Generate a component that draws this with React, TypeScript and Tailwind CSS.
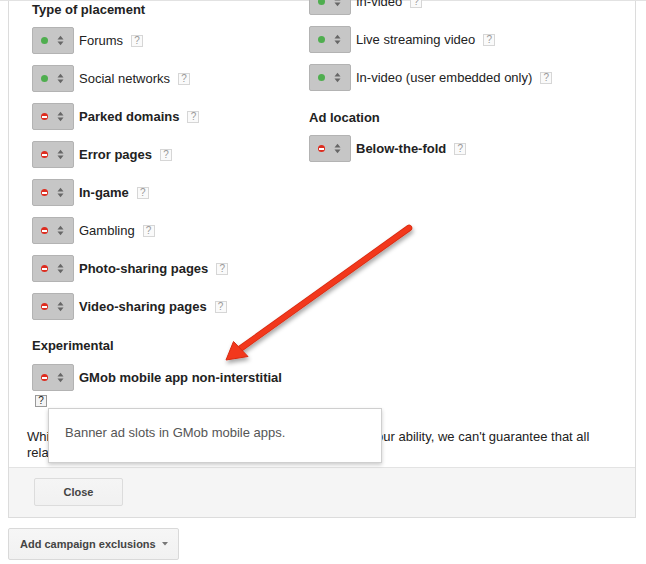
import React from "react";

const Arrows = () => (
  <svg width="7" height="11" viewBox="0 0 7 11" className="block">
    <polygon points="0.5,4.5 3.5,0.8 6.5,4.5" fill="#666" />
    <polygon points="0.5,6.5 3.5,10.2 6.5,6.5" fill="#666" />
  </svg>
);

const Toggle = ({ on }: { on: boolean }) => (
  <div className="flex items-center w-[42px] h-[27px] shrink-0 rounded-[2px] bg-[#c6c6c6] border border-[#b3b3b3] pl-[8px]">
    {on ? (
      <span className="block w-[7px] h-[7px] rounded-full bg-[#4fae4f]" />
    ) : (
      <span className="flex items-center justify-center w-[7px] h-[7px] rounded-full bg-[#dd2c1f]">
        <span className="block w-[5px] h-[2px] bg-white" />
      </span>
    )}
    <span className="ml-[9px]">
      <Arrows />
    </span>
  </div>
);

const Q = ({ dark }: { dark?: boolean }) => (
  <span
    className={
      dark
        ? "inline-flex items-center justify-center w-[12px] h-[12px] border border-[#999] bg-[#f4f4f4] text-[#222] text-[10px] leading-none"
        : "inline-flex items-center justify-center w-[12px] h-[12px] border border-[#d6d6d6] bg-[#fafafa] text-[#999] text-[10px] leading-none"
    }
  >
    ?
  </span>
);

const Row = ({
  label,
  on,
  bold,
  className,
}: {
  label: string;
  on: boolean;
  bold?: boolean;
  className: string;
}) => (
  <div className={`flex items-center h-[27px] ${className}`}>
    <Toggle on={on} />
    <span className={bold ? "ml-[5px] font-bold whitespace-nowrap" : "ml-[5px] whitespace-nowrap"}>{label}</span>
    <span className="ml-[8px] flex">
      <Q />
    </span>
  </div>
);

export default function App() {
  return (
    <div className="relative w-[646px] h-[564px] overflow-hidden bg-white font-['Liberation_Sans',Arial,sans-serif] text-[13px] leading-[16px] text-[#222]">
      <div className="h-px bg-[#e2e2e2]" />
      <div className="ml-[8px] w-[628px] border-x border-b border-[#dcdcdc]">
        <div className="flex pl-[23px] pt-[1px]">
          <div className="w-[277px] shrink-0">
            <div className="font-bold h-[16px]">Type of placement</div>
            <Row className="mt-[9px]" label="Forums" on />
            <Row className="mt-[11px]" label="Social networks" on />
            <Row className="mt-[11px]" label="Parked domains" on={false} bold />
            <Row className="mt-[11px]" label="Error pages" on={false} bold />
            <Row className="mt-[11px]" label="In-game" on={false} bold />
            <Row className="mt-[11px]" label="Gambling" on={false} />
            <Row className="mt-[11px]" label="Photo-sharing pages" on={false} bold />
            <Row className="mt-[11px]" label="Video-sharing pages" on={false} bold />
            <div className="font-bold h-[16px] mt-[18px]">Experimental</div>
            <div className="flex items-center h-[27px] mt-[10px]">
              <Toggle on={false} />
              <span className="ml-[5px] font-bold whitespace-nowrap">GMob mobile app non-interstitial</span>
            </div>
            <div className="flex mt-[4px] ml-[3px]">
              <Q dark />
            </div>
          </div>
          <div className="flex-1">
            <Row className="mt-[-14px]" label="In-video" on />
            <Row className="mt-[11px]" label="Live streaming video" on />
            <Row className="mt-[11px]" label="In-video (user embedded only)" on />
            <div className="font-bold h-[16px] mt-[19px]">Ad location</div>
            <Row className="mt-[9px]" label="Below-the-fold" on={false} bold />
          </div>
        </div>
        <p className="pl-[18px] mt-[22px] mb-[6px] whitespace-nowrap leading-[16px]">
          While we'll make every effort to exclude these, to the best of our ability, we can't guarantee that all
          <br />
          related placements will be excluded.
        </p>
        <div className="h-[50px] border-t border-[#e3e3e3] bg-[#f5f5f5] pl-[25px] pt-[10px]">
          <button className="w-[89px] h-[28px] rounded-[2px] border border-[#dcdcdc] bg-gradient-to-b from-[#f5f5f5] to-[#f1f1f1] text-[11px] font-bold text-[#444]">
            Close
          </button>
        </div>
      </div>
      <div className="ml-[8px] mt-[10px] flex items-center w-[171px] h-[32px] rounded-[2px] border border-[#d9d9d9] bg-gradient-to-b from-[#f6f6f6] to-[#f1f1f1] pl-[11px]">
        <span className="text-[11px] font-bold text-[#444] whitespace-nowrap">Add campaign exclusions</span>
        <svg width="6" height="4" viewBox="0 0 6 4" className="ml-[6px]">
          <polygon points="0,0 6,0 3,3.5" fill="#777" />
        </svg>
      </div>

      <div className="absolute left-[48px] top-[408px] w-[334px] h-[55px] bg-white border border-[#cfcfcf] shadow-[0_2px_4px_rgba(0,0,0,0.2)] pl-[16px] pt-[16px] text-[#555]">
        Banner ad slots in GMob mobile apps.
      </div>

      <svg className="absolute inset-0 pointer-events-none" width="646" height="564" viewBox="0 0 646 564">
        <defs>
          <filter id="sh" x="-20%" y="-20%" width="140%" height="140%">
            <feDropShadow dx="1" dy="3" stdDeviation="2" floodColor="#000" floodOpacity="0.35" />
          </filter>
        </defs>
        <g filter="url(#sh)">
          <line x1="409" y1="228" x2="237" y2="351" stroke="#d62a12" strokeWidth="6.5" strokeLinecap="round" />
          <line x1="409" y1="228" x2="237" y2="351" stroke="#f2391c" strokeWidth="5" strokeLinecap="round" />
          <polygon points="226,360 233.5,341.5 248,356.5" fill="#f2391c" stroke="#d62a12" strokeWidth="1" strokeLinejoin="round" />
        </g>
      </svg>
    </div>
  );
}
